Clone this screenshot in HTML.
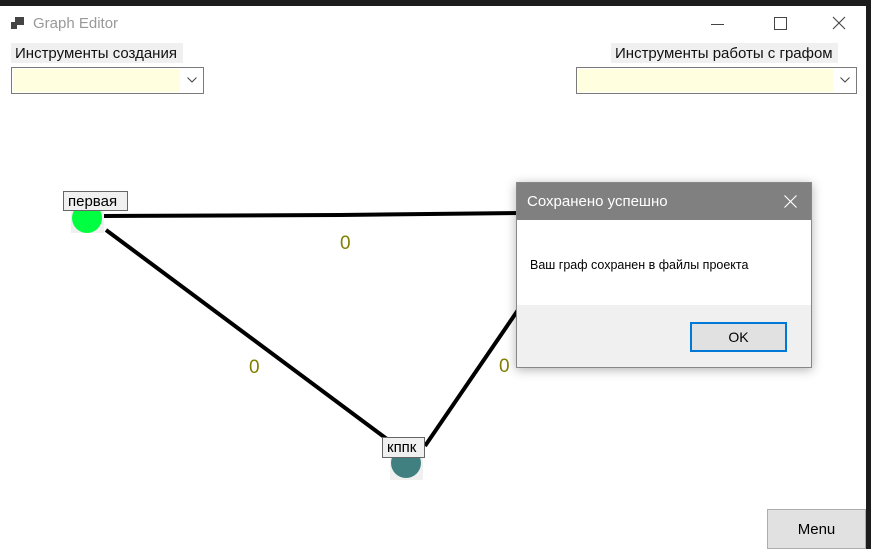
<!DOCTYPE html>
<html><head><meta charset="utf-8"><style>
body{margin:0;width:871px;height:549px;overflow:hidden;background:#fff;font-family:"Segoe UI","Liberation Sans",sans-serif;position:relative}
.a{position:absolute}
</style></head><body>
<div class="a" style="left:0;top:0;width:871px;height:6px;background:#1c1c1c"></div>
<div class="a" style="left:866px;top:0;width:5px;height:549px;background:#1c1c1c"></div>
<svg class="a" style="left:10px;top:16px" width="16" height="16"><rect x="5" y="1" width="9" height="8" fill="#444"/><rect x="1" y="6" width="6" height="7" fill="#444"/></svg>
<div class="a" style="left:33px;top:15px;font-size:15px;color:#999">Graph Editor</div>
<div class="a" style="left:711px;top:24px;width:13px;height:1px;background:#444"></div>
<div class="a" style="left:774px;top:17px;width:11px;height:11px;border:1px solid #444"></div>
<svg class="a" style="left:832px;top:16px" width="14" height="14"><path d="M1 1L13 13M13 1L1 13" stroke="#444" stroke-width="1.1"/></svg>
<div class="a" style="left:11px;top:43px;width:172px;height:20px;background:#f0f0f0;font-size:15px;line-height:21px;padding-left:4px;box-sizing:border-box;color:#111;white-space:nowrap">Инструменты создания</div>
<div class="a" style="left:11px;top:67px;width:193px;height:27px;border:1px solid #7a7a7a;box-sizing:border-box;background:#fff"><div style="position:absolute;left:1px;top:1px;width:167px;height:23px;background:#ffffe0"></div><svg style="position:absolute;right:6px;top:9px" width="10" height="6"><path d="M0.5 0.5L5 5L9.5 0.5" stroke="#444" fill="none"/></svg></div>
<div class="a" style="left:611px;top:43px;width:227px;height:20px;background:#f0f0f0;font-size:15px;line-height:21px;padding-left:4px;box-sizing:border-box;color:#111;white-space:nowrap">Инструменты работы с графом</div>
<div class="a" style="left:576px;top:67px;width:281px;height:27px;border:1px solid #7a7a7a;box-sizing:border-box;background:#fff"><div style="position:absolute;left:1px;top:1px;width:255px;height:23px;background:#ffffe0"></div><svg style="position:absolute;right:6px;top:9px" width="10" height="6"><path d="M0.5 0.5L5 5L9.5 0.5" stroke="#444" fill="none"/></svg></div>
<svg class="a" style="left:0;top:0" width="871" height="549">
<rect x="71" y="203" width="33" height="30" fill="#f0f0f0"/>
<circle cx="87" cy="218" r="15" fill="#00ff40"/>
<rect x="390" y="448" width="33" height="32" fill="#f0f0f0"/>
<circle cx="406" cy="463" r="15" fill="#408080"/>
<path d="M104 216L340 215L520 213" stroke="#000" stroke-width="4" fill="none"/>
<path d="M106 230L395 445" stroke="#000" stroke-width="4"/>
<path d="M425 446L518 310" stroke="#000" stroke-width="4"/>
<g font-size="19" fill="#808000" font-family="Segoe UI,Liberation Sans,sans-serif"><text x="340" y="249">0</text><text x="249" y="373">0</text><text x="499" y="372">0</text></g>
</svg>
<div class="a" style="left:63px;top:191px;width:65px;height:20px;border:1px solid #666;box-sizing:border-box;background:#f0f0f0;font-size:15px;line-height:19px;padding-left:4px">первая</div>
<div class="a" style="left:382px;top:437px;width:43px;height:21px;border:1px solid #666;box-sizing:border-box;background:#f0f0f0;font-size:15px;line-height:20px;padding-left:4px">кппк</div>
<div class="a" style="left:516px;top:182px;width:296px;height:186px;border:1px solid #888;box-sizing:border-box;background:#fff;box-shadow:0 2px 10px rgba(0,0,0,.3)">
<div style="height:37px;background:#808080;color:#fff;font-size:15px;line-height:37px;padding-left:10px;position:relative">Сохранено успешно<svg style="position:absolute;right:14px;top:12px" width="13" height="13"><path d="M0.5 0.5L12.5 12.5M12.5 0.5L0.5 12.5" stroke="#fff" stroke-width="1.2"/></svg></div>
<div style="height:85px;font-size:12.5px;color:#000;padding:38px 0 0 13px;box-sizing:border-box">Ваш граф сохранен в файлы проекта</div>
<div style="position:absolute;left:0;right:0;top:122px;bottom:0;background:#f0f0f0"><div style="position:absolute;left:173px;top:17px;width:97px;height:30px;border:2px solid #0078d7;box-sizing:border-box;background:#e1e1e1;font-size:14px;text-align:center;line-height:26px">OK</div></div>
</div>
<div class="a" style="left:767px;top:509px;width:99px;height:40px;border:1px solid #adadad;box-sizing:border-box;background:#e1e1e1;font-size:15px;text-align:center;line-height:40px">Menu</div>
</body></html>
